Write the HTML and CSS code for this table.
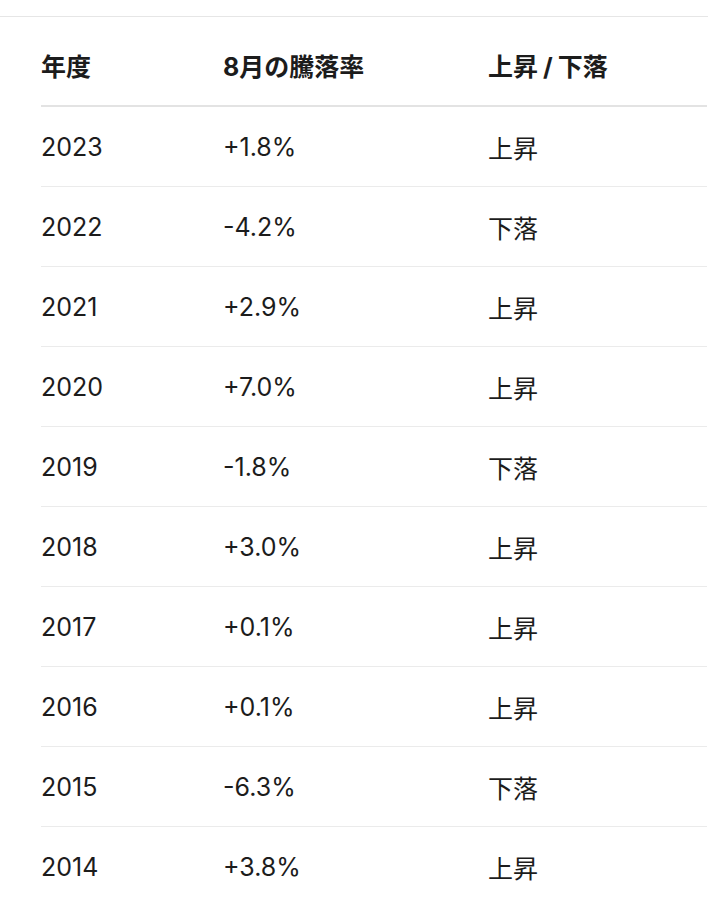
FILE: index.html
```html
<!DOCTYPE html>
<html lang="ja">
<head>
<meta charset="utf-8">
<link rel="stylesheet" href="styles.css">
</head>
<body>
<div class="page">
  <table class="tbl">
    <colgroup><col class="c1"><col class="c2"><col class="c3"></colgroup>
    <thead>
      <tr><th>年度</th><th>8月の騰落率</th><th>上昇<span class="slash">/</span>下落</th></tr>
    </thead>
    <tbody>
      <tr><td>2023</td><td>+1.8%</td><td>上昇</td></tr>
      <tr><td>2022</td><td>-4.2%</td><td>下落</td></tr>
      <tr><td>2021</td><td>+2.9%</td><td>上昇</td></tr>
      <tr><td>2020</td><td>+7.0%</td><td>上昇</td></tr>
      <tr><td>2019</td><td>-1.8%</td><td>下落</td></tr>
      <tr><td>2018</td><td>+3.0%</td><td>上昇</td></tr>
      <tr><td>2017</td><td>+0.1%</td><td>上昇</td></tr>
      <tr><td>2016</td><td>+0.1%</td><td>上昇</td></tr>
      <tr><td>2015</td><td>-6.3%</td><td>下落</td></tr>
      <tr><td>2014</td><td>+3.8%</td><td>上昇</td></tr>
    </tbody>
  </table>
</div>
</body>
</html>
```

FILE: styles.css
```css
html, body {
  margin: 0;
  padding: 0;
  background: #ffffff;
}
body {
  font-family: Inter, "Noto Sans CJK JP", sans-serif;
  color: #1c1c1c;
}
.page {
  margin-top: 16px;
  border-top: 1px solid #e6e6e6;
  padding-left: 41px;
  padding-right: 1px;
}
.tbl {
  width: 666px;
  border-collapse: collapse;
  table-layout: fixed;
}
.c1 { width: 182px; }
.c2 { width: 265px; }
.c3 { width: 219px; }
.tbl th {
  height: 80px;
  padding: 8px 0 0 0;
  text-align: left;
  font-weight: 700;
  font-size: 25px;
  border-bottom: 2px solid #e3e3e3;
  vertical-align: middle;
}
.slash {
  margin: 0 5px;
}
.tbl td {
  height: 79px;
  padding: 0;
  font-size: 25px;
  font-weight: 400;
  border-bottom: 1px solid #ebebeb;
  vertical-align: middle;
}
.tbl tbody tr:last-child td {
  border-bottom: none;
}
```
